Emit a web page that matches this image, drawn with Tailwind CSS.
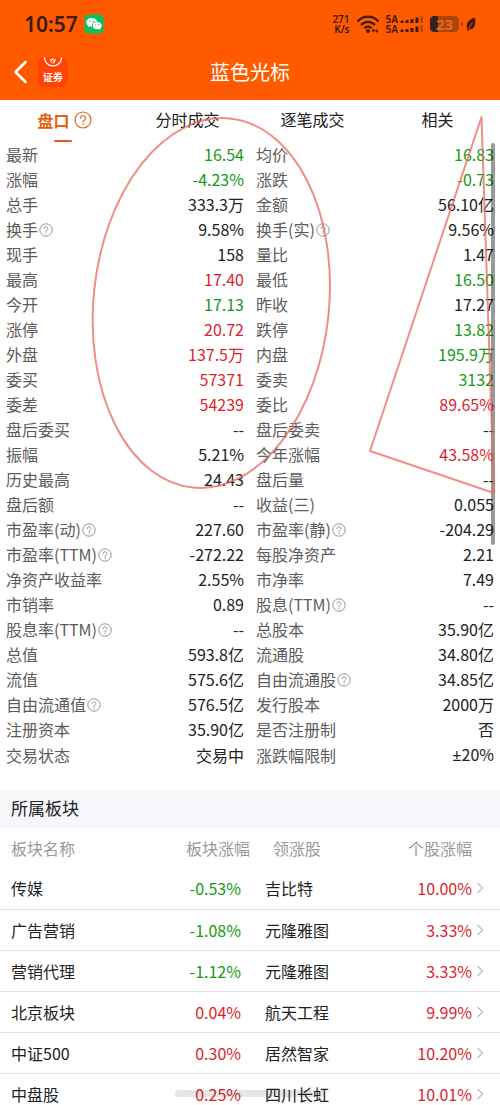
<!DOCTYPE html>
<html lang="zh-CN">
<head>
  <meta charset="UTF-8" />
  <meta name="viewport" content="width=device-width, initial-scale=1.0" />
  <title>蓝色光标 - 盘口</title>
  <script src="https://cdn.jsdelivr.net/npm/@tailwindcss/browser@4"></script>
  <style>
    body {
      font-family: 'Noto Sans CJK SC', sans-serif;
    }
  </style>
</head>
<body class="bg-white text-[#222] h-screen overflow-hidden flex flex-col">
  <svg class="hidden">
    <symbol id="help" viewBox="0 0 14 14">
      <circle cx="7" cy="7" r="6.2" fill="none" stroke="currentColor" stroke-width="0.9" />
      <path d="M5.1 5.6a1.9 1.9 0 1 1 2.9 1.6c-.7.4-1 .7-1 1.4" fill="none" stroke="currentColor" stroke-width="0.9" stroke-linecap="round" />
      <circle cx="7" cy="10.2" r="0.6" fill="currentColor" />
    </symbol>
  </svg>

  <header class="bg-[#ff5a00] shrink-0">
    <!-- status bar -->
    <div class="h-12 px-6 flex items-center justify-between text-[#3a1d0c]">
      <div class="flex items-center gap-1.5">
        <span class="text-[21px] leading-6 font-semibold font-['Noto_Sans']">10:57</span>
        <svg class="w-5 h-5" viewBox="0 0 20 20">
          <rect x="0.5" y="0.5" width="19" height="19" rx="4.5" fill="#07c45e" />
          <path d="M7.6 4C4.6 4 2.3 5.9 2.3 8.3c0 1.3.7 2.5 1.9 3.3l-.5 1.5 1.8-.9c.7.2 1.4.3 2.1.3h.4c-.1-.3-.1-.6-.1-.9 0-2.3 2.2-4.1 4.9-4.1h.4C12.7 5.5 10.4 4 7.6 4z" fill="#fff" />
          <path d="M17.7 11.7c0-2-2-3.6-4.5-3.6s-4.6 1.6-4.6 3.6 2 3.6 4.6 3.6c.5 0 1.100-.1 1.600-.2l1.500.8-.4-1.300c1.100-.7 1.800-1.700 1.800-2.900z" fill="#fff" />
          <circle cx="5.9" cy="7.2" r="0.7" fill="#07c45e" />
          <circle cx="9.4" cy="7.2" r="0.7" fill="#07c45e" />
          <circle cx="11.8" cy="10.7" r="0.6" fill="#07c45e" />
          <circle cx="14.7" cy="10.7" r="0.6" fill="#07c45e" />
        </svg>
      </div>
      <div class="flex items-center font-['Noto_Sans'] font-semibold">
        <div class="text-[10px] leading-[10px] text-right">271<br />K/s</div>
        <svg class="ml-1.5 w-6 h-5" viewBox="0 0 24 20">
          <g fill="none" stroke="currentColor" stroke-width="2.3">
            <path d="M1.5 7.5c6-6.400 15-6.400 21 0" />
            <path d="M5 11c4-4.300 10-4.300 14 0" />
            <path d="M8.3 14.3c2.200-2.300 5.200-2.300 7.400 0" />
          </g>
          <circle cx="12" cy="17" r="2" fill="currentColor" />
          <path d="M15.5 16.500l2.500-2v4zM22.500 17l-2.500-2v4z" fill="currentColor" />
          <path d="M17 16.700h4" stroke="currentColor" stroke-width="1" />
        </svg>
        <div class="ml-1.5 text-[10px] leading-[10px]">5A<br />5A</div>
        <svg class="ml-0.5 w-6 h-[18px]" viewBox="0 0 24 18" fill="currentColor">
          <g id="bars">
            <rect x="0.5" y="5.5" width="3" height="2.500" rx="0.600" />
            <rect x="5.5" y="5" width="3" height="3" rx="0.600" />
            <rect x="10.5" y="4" width="3" height="4" rx="0.600" />
            <rect x="15.5" y="2.500" width="3" height="5.500" rx="0.600" />
            <rect x="20.5" y="1" width="2.500" height="7" rx="0.600" opacity="0.35" />
          </g>
          <use href="#bars" y="9" />
        </svg>
        <svg class="ml-1.5 w-[34px] h-[18px]" viewBox="0 0 34 18">
          <rect x="0" y="1" width="29" height="16" rx="4.5" fill="#a8460f" />
          <path d="M4.5 1H8v16H4.500A4.500 4.500 0 0 1 0 12.500v-7A4.500 4.500 0 0 1 4.500 1z" fill="#33231a" />
          <path d="M31 6.500q2 .5 2 2.500t-2 2.500z" fill="#a8460f" />
          <text x="14.500" y="14.500" text-anchor="middle" font-size="15" font-weight="700" fill="#e8681f">23</text>
        </svg>
        <svg class="ml-0.5 w-2.5 h-4" viewBox="0 0 10 16">
          <path d="M9 1.500C4.500 3 .6 5.500.7 10c0 1.500.5 2.600 1.100 3.200l-.9 1.500 1 .5 1-1.600c4 .3 5.900-2.600 6.300-6 .2-2.200.1-4.200-.2-6.100z" fill="currentColor" />
          <path d="M2.600 13L6.300 6.500" stroke="#ff5a00" stroke-width="0.900" />
        </svg>
      </div>
    </div>

    <!-- nav bar -->
    <div class="h-[52px] px-3 pb-1 grid grid-cols-[1fr_auto_1fr] items-center text-white">
      <div class="flex items-center gap-2">
        <button type="button" aria-label="返回">
          <svg class="w-[18px] h-6" viewBox="0 0 18 24">
            <path d="M13.500 2L3.500 12l10 10" fill="none" stroke="#fff" stroke-width="2.600" stroke-linecap="round" stroke-linejoin="round" />
          </svg>
        </button>
        <a href="#" aria-label="证券">
          <svg class="w-[30px] h-[30px]" viewBox="0 0 30 30">
            <rect width="30" height="30" rx="6" fill="#ff4406" />
            <path d="M6.500 0.500a8.500 8.500 0 0 0 17 0" fill="none" stroke="#fff" stroke-width="1.200" />
            <path d="M12 4.500l4-3M13.500 6l4-4M15.500 6.500l2-4M12 3l3-1.500" stroke="#fff" stroke-width="1" />
            <text x="15" y="23.500" text-anchor="middle" font-size="10" font-weight="700" fill="#fff">证券</text>
          </svg>
        </a>
      </div>
      <h1 class="text-xl">蓝色光标</h1>
    </div>
  </header>

  <main class="relative flex-1">
    <nav class="h-[42px] grid grid-cols-4 text-base leading-[38px] text-center">
      <a href="#" class="relative flex items-center justify-center gap-1 h-[39px] pl-1 font-bold text-[#e8600f]">
        盘口
        <svg class="w-[18px] h-[18px]"><use href="#help" /></svg>
        <span class="absolute top-10 left-1/2 -translate-x-1/2 w-[18px] h-0.5 rounded bg-[#e05a1c]"></span>
      </a>
      <a href="#">分时成交</a>
      <a href="#">逐笔成交</a>
      <a href="#">相关</a>
    </nav>

    <table class="w-full table-fixed text-base">
      <tbody id="quote"></tbody>
    </table>

    <h2 class="mt-[22px] h-[38px] px-[11px] bg-[#f5f7fa] text-[17px] leading-[36px]">所属板块</h2>
    <table class="w-full table-fixed text-base">
      <thead>
        <tr class="h-10 text-[#999]">
          <th class="pl-[11px] text-left font-normal">板块名称</th>
          <th class="text-right font-normal">板块涨幅</th>
          <th class="pl-[23px] text-left font-normal">领涨股</th>
          <th class="pr-7 text-right font-normal">个股涨幅</th>
        </tr>
      </thead>
      <tbody id="sectors"></tbody>
    </table>

    <div class="absolute top-[43px] right-[5px] w-1 h-[402px] rounded-full bg-black/40"></div>

    <!-- hand-drawn marks over the quote list -->
    <svg class="absolute -top-[100px] left-0 w-[500px] h-[520px] pointer-events-none" viewBox="0 0 500 520" fill="none" stroke="#e8695f" stroke-opacity="0.75" stroke-width="2" stroke-linejoin="round">
      <ellipse cx="211.3" cy="303" rx="117.8" ry="185.5" transform="rotate(5.7 211.3 303)" />
      <path d="M481.5 117L370 451l124 42z" />
    </svg>
  </main>

  <div class="fixed bottom-2 left-1/2 -translate-x-1/2 w-[150px] h-[7px] rounded-full bg-[#e6e6e6] mix-blend-multiply"></div>

  <script>
    const colors = { g: "text-[#159a15]", r: "text-[#dc1f2e]", k: "text-[#222]" };

    // label, value, color; a trailing "?" on the label adds the help icon
    const quote = [
      ["最新", "16.54", "g", "均价", "16.83", "g"],
      ["涨幅", "-4.23%", "g", "涨跌", "-0.73", "g"],
      ["总手", "333.3万", "k", "金额", "56.10亿", "k"],
      ["换手?", "9.58%", "k", "换手(实)?", "9.56%", "k"],
      ["现手", "158", "k", "量比", "1.47", "k"],
      ["最高", "17.40", "r", "最低", "16.50", "g"],
      ["今开", "17.13", "g", "昨收", "17.27", "k"],
      ["涨停", "20.72", "r", "跌停", "13.82", "g"],
      ["外盘", "137.5万", "r", "内盘", "195.9万", "g"],
      ["委买", "57371", "r", "委卖", "3132", "g"],
      ["委差", "54239", "r", "委比", "89.65%", "r"],
      ["盘后委买", "--", "k", "盘后委卖", "--", "k"],
      ["振幅", "5.21%", "k", "今年涨幅", "43.58%", "r"],
      ["历史最高", "24.43", "k", "盘后量", "--", "k"],
      ["盘后额", "--", "k", "收益(三)", "0.055", "k"],
      ["市盈率(动)?", "227.60", "k", "市盈率(静)?", "-204.29", "k"],
      ["市盈率(TTM)?", "-272.22", "k", "每股净资产", "2.21", "k"],
      ["净资产收益率", "2.55%", "k", "市净率", "7.49", "k"],
      ["市销率", "0.89", "k", "股息(TTM)?", "--", "k"],
      ["股息率(TTM)?", "--", "k", "总股本", "35.90亿", "k"],
      ["总值", "593.8亿", "k", "流通股", "34.80亿", "k"],
      ["流值", "575.6亿", "k", "自由流通股?", "34.85亿", "k"],
      ["自由流通值?", "576.5亿", "k", "发行股本", "2000万", "k"],
      ["注册资本", "35.90亿", "k", "是否注册制", "否", "k"],
      ["交易状态", "交易中", "k", "涨跌幅限制", '<span class="font-[\'Noto_Sans\']">±</span>20%', "k"]
    ];

    const sectors = [
      ["传媒", "-0.53%", "吉比特", "10.00%"],
      ["广告营销", "-1.08%", "元隆雅图", "3.33%"],
      ["营销代理", "-1.12%", "元隆雅图", "3.33%"],
      ["北京板块", "0.04%", "航天工程", "9.99%"],
      ["中证500", "0.30%", "居然智家", "10.20%"],
      ["中盘股", "0.25%", "四川长虹", "10.01%"]
    ];

    function cells(label, value, color) {
      const help = label.endsWith("?") ? '<svg class="inline-block w-[14px] h-[14px] ml-px mb-1 text-[#888]"><use href="#help" /></svg>' : "";
      return `<th class="pl-1.5 text-left font-normal whitespace-nowrap text-[#5c5c5c]">${label.replace("?", "")}${help}</th>
        <td class="pr-1.5 text-right whitespace-nowrap ${colors[color]}">${value}</td>`;
    }

    document.getElementById("quote").innerHTML = quote.map(r =>
      `<tr class="h-[25px] leading-[25px]">${cells(r[0], r[1], r[2])}${cells(r[3], r[4], r[5])}</tr>`
    ).join("");

    document.getElementById("sectors").innerHTML = sectors.map(r =>
      `<tr class="h-[41px] border-b border-[#e2e2e2]">
        <td class="pl-[11px]">${r[0]}</td>
        <td class="pr-[9px] text-right ${r[1].startsWith("-") ? colors.g : colors.r}">${r[1]}</td>
        <td class="pl-[15px]">${r[2]}</td>
        <td class="pr-4 ${colors.r}">
          <div class="flex items-center justify-end gap-1">${r[3]}
            <svg class="w-2 h-3" viewBox="0 0 8 12"><path d="M1.5 1l5 5-5 5" fill="none" stroke="#bbb" stroke-width="1.2" /></svg>
          </div>
        </td>
      </tr>`
    ).join("");
  </script>
</body>
</html>
